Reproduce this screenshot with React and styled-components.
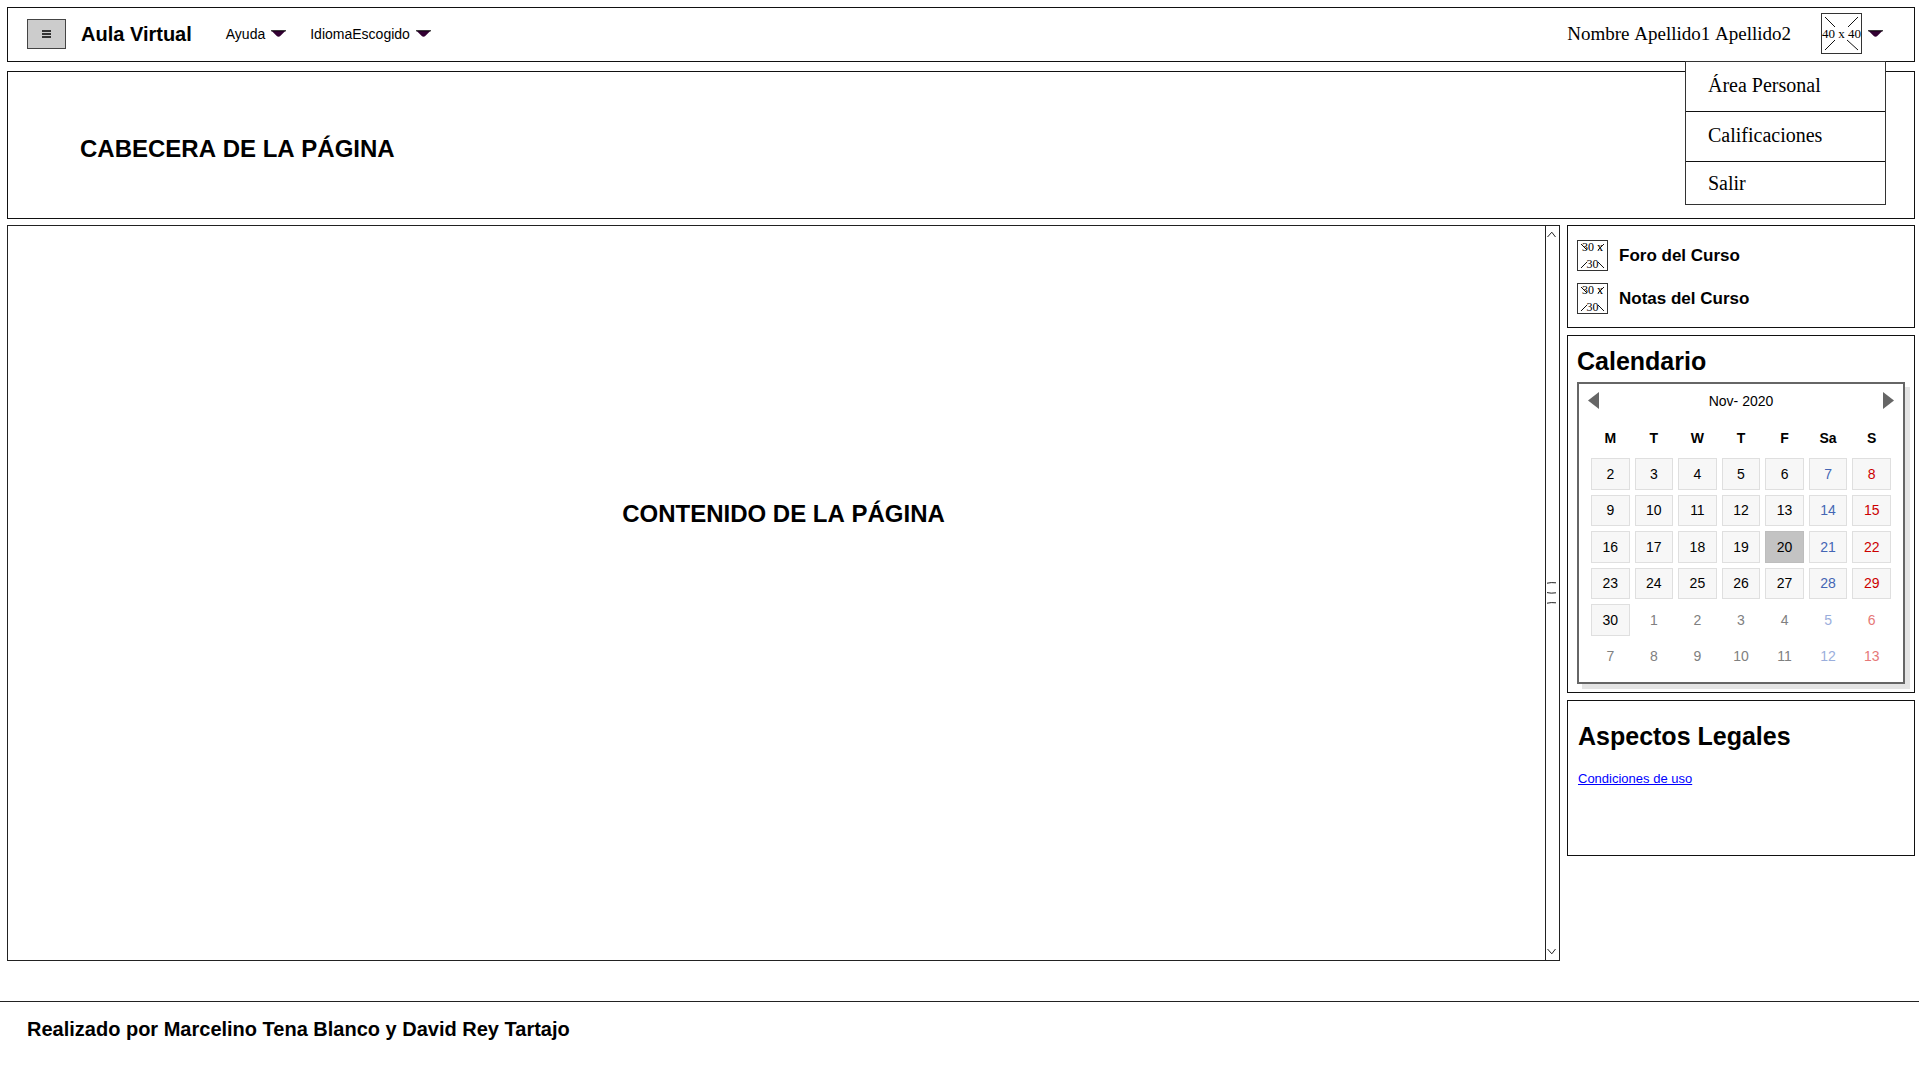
import React from "react";
import styled, { createGlobalStyle } from "styled-components";

const GlobalStyle = createGlobalStyle`
  *, *::before, *::after { box-sizing: border-box; }
  body {
    margin: 0;
    background: #fff;
    color: #000;
    font-family: "Liberation Sans", Arial, sans-serif;
    font-size: 14px;
  }
  button, select { font: inherit; color: inherit; }
`;

const serif = `"Liberation Serif", "Times New Roman", serif`;

const Page = styled.div`
  display: flex;
  flex-direction: column;
  min-height: 100vh;
`;

const Upper = styled.div`
  flex: 1;
  display: flex;
  flex-direction: column;
  padding: 7px 4px 40px 7px;
`;

const TopBar = styled.nav`
  position: relative;
  display: flex;
  align-items: center;
  height: 55px;
  padding: 0 31px 2px 19px;
  border: 1px solid #111;
`;

const MenuToggle = styled.button`
  display: flex;
  align-items: center;
  justify-content: center;
  width: 39px;
  height: 30px;
  padding: 0;
  border: 1px solid #444;
  background: #ccc;
`;

const Brand = styled.strong`
  margin: 0 34px 0 15px;
  font-size: 20px;
  line-height: 24px;
`;

const BarItems = styled.div`
  display: flex;
  gap: 24px;
`;

const BarItem = styled.div`
  display: flex;
  align-items: center;
  gap: 6px;
`;

const PlainButton = styled.button`
  display: flex;
  align-items: center;
  gap: 6px;
  padding: 0;
  border: 0;
  background: none;
  line-height: 20px;
`;

const LanguageSelect = styled.select`
  appearance: none;
  padding: 0;
  border: 0;
  background: none;
  line-height: 20px;
`;

const User = styled.div`
  display: flex;
  align-items: center;
  gap: 30px;
  margin-left: auto;
  font-family: ${serif};
  font-size: 19px;
  font-kerning: none;
`;

const UserMenu = styled.ul`
  position: absolute;
  top: 100%;
  right: 28px;
  z-index: 1;
  width: 201px;
  margin: 0;
  padding: 0;
  list-style: none;
  border: 1px solid #333;
  background: #fff;
`;

const UserMenuItem = styled.li`
  & + & { border-top: 1px solid #111; }
`;

const UserMenuLink = styled.a`
  display: block;
  padding: ${(p) => (p.$last ? "9px 22px" : "8px 22px 11px")};
  color: #000;
  font-family: ${serif};
  font-size: 20px;
  line-height: ${(p) => (p.$last ? 24 : 30)}px;
  text-decoration: none;
`;

const PictureBox = styled.span`
  position: relative;
  display: flex;
  align-items: center;
  justify-content: center;
  flex: none;
  width: ${(p) => p.$size}px;
  height: ${(p) => p.$size}px;
  border: 1px solid #333;
  font-family: ${serif};
  font-size: ${(p) => (p.$size > 40 ? 13 : 12)}px;
  line-height: 17px;
  text-align: center;
  white-space: nowrap;
`;

const Cross = styled.svg`
  position: absolute;
  inset: -1px;
`;

const Banner = styled.header`
  display: flex;
  align-items: center;
  height: 148px;
  margin: 9px 0 6px;
  padding: 8px 72px 0;
  border: 1px solid #111;
`;

const Title = styled.h1`
  margin: 0;
  font-size: 24px;
  line-height: 28px;
  font-kerning: none;
`;

const Columns = styled.div`
  flex: 1;
  display: grid;
  grid-template-columns: minmax(0, 1fr) 348px;
  gap: 7px;
`;

const Content = styled.main`
  display: flex;
  border: 1px solid #222;
`;

const ContentBody = styled.div`
  flex: 1;
  display: flex;
  align-items: center;
  justify-content: center;
  padding: 0 0 158px 14px;
`;

const ScrollTrack = styled.div`
  display: flex;
  flex-direction: column;
  align-items: center;
  justify-content: space-between;
  width: 14px;
  padding: 5px 3px 5px 0;
  border-left: 1px solid #222;
`;

const Sidebar = styled.aside`
  display: flex;
  flex-direction: column;
  gap: 7px;
`;

const Panel = styled.section`
  padding: ${(p) => p.$pad};
  border: 1px solid #111;
`;

const PanelTitle = styled.h2`
  margin: 0;
  font-size: 25px;
  line-height: 42px;
`;

const CourseLinks = styled.ul`
  display: flex;
  flex-direction: column;
  gap: 12px;
  margin: 0;
  padding: 0;
  list-style: none;
`;

const CourseLink = styled.a`
  display: flex;
  align-items: center;
  gap: 11px;
  color: #000;
  text-decoration: none;
`;

const CourseName = styled.strong`
  font-size: 17px;
`;

const Calendar = styled.div`
  padding: 0 7px 5px;
  border: 2px solid #666;
  background: #fff;
  box-shadow: 5px 5px 0 #e4e4e4;
`;

const CalendarBar = styled.div`
  display: flex;
  align-items: center;
  justify-content: space-between;
  height: 33px;
  padding: 0 2px;
`;

const Days = styled.table`
  width: 100%;
  height: 260px;
  table-layout: fixed;
  border-spacing: 5px;
`;

const Weekday = styled.th`
  height: 31px;
  padding: 0;
`;

const tones = {
  day: ["#000", "#808080"],
  sat: ["#4466b4", "#9aaedc"],
  sun: ["#cc0000", "#e67878"],
};

const DayCell = styled.td`
  height: 31px;
  padding: 0;
  border: 1px solid ${(p) => (p.$muted ? "transparent" : p.$selected ? "#bdbdbd" : "#dfdfdf")};
  background: ${(p) => (p.$muted ? "none" : p.$selected ? "#c3c3c3" : "#f7f7f7")};
  color: ${(p) => tones[p.$tone][p.$muted ? 1 : 0]};
`;

const DayButton = styled.button`
  display: block;
  width: 100%;
  padding: 0;
  border: 0;
  background: none;
  line-height: 28px;
  text-align: center;
`;

const LegalLink = styled.a`
  display: inline-block;
  margin-top: 12px;
  color: #0000ff;
  font-size: 13px;
  line-height: 20px;
`;

const Footer = styled.footer`
  height: 78px;
  padding: 15px 27px;
  border-top: 1px solid #222;
  font-size: 20px;
  font-weight: bold;
  line-height: 24px;
`;

const Caret = () => (
  <svg width="15" height="8" viewBox="0 0 15 8" aria-hidden="true">
    <path d="M.5 .8H14.5L9.5 5.8Q7.5 7.8 5.5 5.8Z" fill="#330033" />
    <path d="M0 .8H15" stroke="#000" strokeWidth="1" />
  </svg>
);

const Chevron = ({ down }) => (
  <svg width="9" height="7" viewBox="0 0 9 7" fill="none" stroke="#222" aria-hidden="true">
    <path d={down ? "M.5 1L4.8 5.8L8.5 1" : "M.5 6L4.8 1.2L8.5 6"} />
  </svg>
);

const Grip = () => (
  <svg width="9" height="22" viewBox="0 0 9 22" fill="none" stroke="#222" aria-hidden="true">
    <path d="M0 1.2Q4 .2 9 .8M0 10.6Q4 11.6 9 10.8M0 21.2Q4 20.2 9 20.8" />
  </svg>
);

const Triangle = ({ right }) => (
  <svg width="11" height="17" viewBox="0 0 11 17" aria-hidden="true">
    <path d={right ? "M0 0L11 8.5L0 17Z" : "M11 0L0 8.5L11 17Z"} fill="#666" />
  </svg>
);

const Avatar = () => (
  <PictureBox $size={41}>
    <Cross width="41" height="41" fill="none" stroke="#111">
      <path d="M4 4L14 14M37 4L27 14M4 37L14 27M37 37L26 27" />
    </Cross>
    40 x 40
  </PictureBox>
);

const Thumb = () => (
  <PictureBox $size={31}>
    <Cross width="31" height="31" fill="none" stroke="#111">
      <path d="M4 4L10 10M27 4L21 10M4 28L10 22M27 28L21 22" />
    </Cross>
    <span>
      30 x<br />30
    </span>
  </PictureBox>
);

const weekdays = ["M", "T", "W", "T", "F", "Sa", "S"];
const weeks = Array.from({ length: 6 }, (_, w) =>
  weekdays.map((_, d) => {
    const n = 2 + w * 7 + d;
    return { n: n > 30 ? n - 30 : n, muted: n > 30, tone: d === 5 ? "sat" : d === 6 ? "sun" : "day" };
  })
);

export default function App() {
  return (
    <Page>
      <GlobalStyle />
      <Upper>
        <TopBar>
          <MenuToggle type="button" aria-label="Menú">
            <svg width="9" height="8" viewBox="0 0 9 8" stroke="#000" strokeWidth="1.4">
              <path d="M0 1H9M0 4H9M0 7H9" />
            </svg>
          </MenuToggle>
          <Brand>Aula Virtual</Brand>
          <BarItems>
            <PlainButton type="button">
              Ayuda
              <Caret />
            </PlainButton>
            <BarItem>
              <LanguageSelect aria-label="Idioma" defaultValue="actual">
                <option value="actual">IdiomaEscogido</option>
              </LanguageSelect>
              <Caret />
            </BarItem>
          </BarItems>
          <User>
            <span>Nombre Apellido1 Apellido2</span>
            <PlainButton type="button" aria-label="Menú de usuario" aria-expanded="true">
              <Avatar />
              <Caret />
            </PlainButton>
          </User>
          <UserMenu>
            <UserMenuItem><UserMenuLink href="#area">Área Personal</UserMenuLink></UserMenuItem>
            <UserMenuItem><UserMenuLink href="#calificaciones">Calificaciones</UserMenuLink></UserMenuItem>
            <UserMenuItem><UserMenuLink href="#salir" $last>Salir</UserMenuLink></UserMenuItem>
          </UserMenu>
        </TopBar>

        <Banner>
          <Title>CABECERA DE LA PÁGINA</Title>
        </Banner>

        <Columns>
          <Content>
            <ContentBody>
              <Title as="h2">CONTENIDO DE LA PÁGINA</Title>
            </ContentBody>
            <ScrollTrack>
              <Chevron />
              <Grip />
              <Chevron down />
            </ScrollTrack>
          </Content>

          <Sidebar>
            <Panel $pad="14px 9px 13px">
              <CourseLinks>
                <li><CourseLink href="#foro"><Thumb /><CourseName>Foro del Curso</CourseName></CourseLink></li>
                <li><CourseLink href="#notas"><Thumb /><CourseName>Notas del Curso</CourseName></CourseLink></li>
              </CourseLinks>
            </Panel>

            <Panel $pad="4px 9px 8px">
              <PanelTitle>Calendario</PanelTitle>
              <Calendar>
                <CalendarBar>
                  <PlainButton type="button" aria-label="Mes anterior"><Triangle /></PlainButton>
                  <span>Nov- 2020</span>
                  <PlainButton type="button" aria-label="Mes siguiente"><Triangle right /></PlainButton>
                </CalendarBar>
                <Days>
                  <thead>
                    <tr>{weekdays.map((d, i) => <Weekday key={i} scope="col">{d}</Weekday>)}</tr>
                  </thead>
                  <tbody>
                    {weeks.map((week, w) => (
                      <tr key={w}>
                        {week.map((d) => (
                          <DayCell key={d.n} $tone={d.tone} $muted={d.muted} $selected={d.n === 20}>
                            <DayButton type="button">{d.n}</DayButton>
                          </DayCell>
                        ))}
                      </tr>
                    ))}
                  </tbody>
                </Days>
              </Calendar>
            </Panel>

            <Panel $pad="14px 10px 66px">
              <PanelTitle>Aspectos Legales</PanelTitle>
              <LegalLink href="#condiciones">Condiciones de uso</LegalLink>
            </Panel>
          </Sidebar>
        </Columns>
      </Upper>
      <Footer>Realizado por Marcelino Tena Blanco y David Rey Tartajo</Footer>
    </Page>
  );
}
